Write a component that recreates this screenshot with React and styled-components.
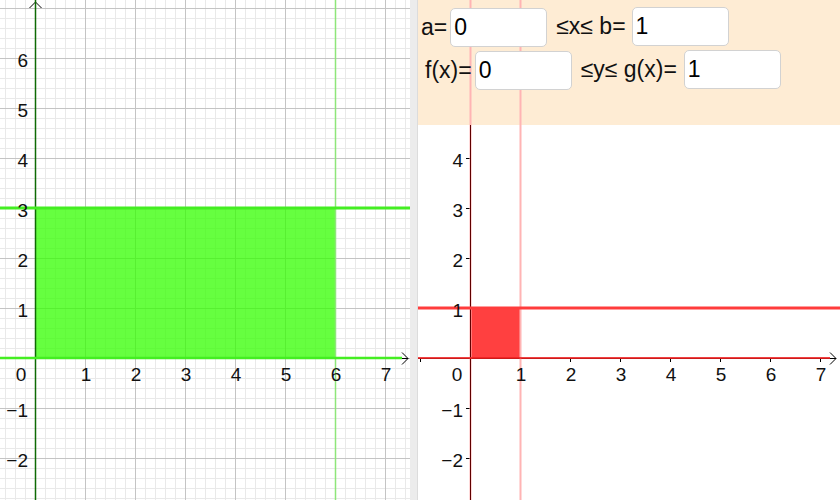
import styled, { createGlobalStyle } from 'styled-components';

const GlobalStyle = createGlobalStyle`
  html, body {
    margin: 0;
    padding: 0;
    background: #fff;
    overflow: hidden;
  }
  body {
    font-family: 'Liberation Sans', Arial, sans-serif;
  }
`;

const Page = styled.div`
  display: flex;
  width: 840px;
  height: 500px;
  overflow: hidden;
`;

const LeftView = styled.div`
  width: 410px;
  height: 500px;
  flex-shrink: 0;
  background: #fff;
`;

const Divider = styled.div`
  width: 7px;
  flex-shrink: 0;
  background: #ececec;
  border-right: 1px solid #dcdcdc;
`;

const RightView = styled.div`
  position: relative;
  flex: 1;
  height: 500px;
  background: #fff;
`;

const Canvas = styled.svg`
  position: absolute;
  inset: 0;
  pointer-events: none;
`;

const InputPanel = styled.div`
  height: 125px;
  box-sizing: border-box;
  padding: 6px 0 0 3px;
  background: #feecd4;
  display: flex;
  flex-direction: column;
  gap: 2px;
`;

const Row = styled.div`
  display: flex;
  align-items: center;
  gap: 9px;
  margin-left: ${(p) => p.$indent || 0}px;
`;

const Field = styled.label`
  display: flex;
  align-items: center;
  gap: ${(p) => p.$gap || 3}px;
  font-size: 23px;
  color: #111;
  white-space: pre;
  position: relative;
  z-index: 1;
  margin-top: ${(p) => p.$shift || 0}px;
`;

const Box = styled.input`
  width: 97px;
  height: 39px;
  box-sizing: border-box;
  border: 1px solid #d2d2d2;
  border-radius: 5px;
  background: #fff;
  padding: 0 3px;
  font-family: 'Liberation Sans', Arial, sans-serif;
  font-size: 23px;
  color: #000;
  outline: none;
`;

const U = 50;
const LABEL = { fontFamily: 'Liberation Sans, Arial, sans-serif', fontSize: 19, fill: '#111' };

function LeftGraph() {
  const ox = 35;
  const oy = 358;
  const minor = [];
  for (let x = ox - 30; x <= 410; x += 10) minor.push(x);
  const minorY = [];
  for (let y = oy - 360; y <= 500; y += 10) minorY.push(y);
  const xs = [1, 2, 3, 4, 5, 6, 7];
  const ys = [6, 5, 4, 3, 2, 1, -1, -2];
  return (
    <svg width="410" height="500" style={{ display: 'block' }}>
      {minor.map((x) => (
        <line key={'mx' + x} x1={x + 0.5} y1="0" x2={x + 0.5} y2="500" stroke="#e9e9e9" />
      ))}
      {minorY.map((y) => (
        <line key={'my' + y} x1="0" y1={y + 0.5} x2="410" y2={y + 0.5} stroke="#e9e9e9" />
      ))}
      {minor.filter((x) => (x - ox) % 50 === 0).map((x) => (
        <line key={'Mx' + x} x1={x + 0.5} y1="0" x2={x + 0.5} y2="500" stroke="#c4c4c4" />
      ))}
      {minorY.filter((y) => (oy - y) % 50 === 0).map((y) => (
        <line key={'My' + y} x1="0" y1={y + 0.5} x2="410" y2={y + 0.5} stroke="#c4c4c4" />
      ))}

      <rect x={ox} y={oy - 3 * U} width={6 * U} height={3 * U} fill="#33ff00" fillOpacity="0.75" />

      {/* axes */}
      <line x1="0" y1={oy + 0.5} x2="408" y2={oy + 0.5} stroke="#000" />
      <polyline points={`402,${oy - 5.5} 408,${oy + 0.5} 402,${oy + 6.5}`} fill="none" stroke="#000" />
      <line x1={ox + 0.5} y1="2" x2={ox + 0.5} y2="500" stroke="#000" />
      <polyline points={`${ox - 5.5},8 ${ox + 0.5},2 ${ox + 6.5},8`} fill="none" stroke="#000" />

      {/* boundary lines */}
      <line x1={ox + 6 * U + 0.5} y1="0" x2={ox + 6 * U + 0.5} y2="500" stroke="#8ee67a" strokeWidth="1.5" />
      <line x1={ox + 0.5} y1="0" x2={ox + 0.5} y2="500" stroke="#0e6a04" strokeWidth="1.5" />
      <line x1="0" y1={oy - 3 * U} x2="410" y2={oy - 3 * U} stroke="#44ee22" strokeWidth="3" />
      <line x1="0" y1={oy} x2="402" y2={oy} stroke="#44ee22" strokeWidth="2.5" />

      {xs.map((n) => (
        <text key={'xl' + n} x={ox + n * U + 1} y="381" textAnchor="middle" {...LABEL}>{n}</text>
      ))}
      <text x="21" y="381" textAnchor="middle" {...LABEL}>0</text>
      {ys.map((n) => (
        <text key={'yl' + n} x="28" y={oy - n * U + 9} textAnchor="end" {...LABEL}>
          {n < 0 ? '\u2212' + -n : n}
        </text>
      ))}
    </svg>
  );
}

function RightGraph() {
  const ox = 52;
  const oy = 358;
  const top = 125;
  const xs = [1, 2, 3, 4, 5, 6, 7];
  const ys = [4, 3, 2, 1, -1, -2];
  return (
    <Canvas width="422" height="500">
      <rect x={ox} y={oy - U} width={U} height={U} fill="#ff0000" fillOpacity="0.75" />

      {/* axes */}
      <line x1="0" y1={oy + 0.5} x2="418" y2={oy + 0.5} stroke="#000" />
      <polyline points={`412,${oy - 5.5} 418,${oy + 0.5} 412,${oy + 6.5}`} fill="none" stroke="#000" />
      <line x1={ox + 0.5} y1={top} x2={ox + 0.5} y2="500" stroke="#000" />
      {[-1, ...xs].map((n) => (
        <line key={'xt' + n} x1={ox + n * U + 0.5} y1={oy} x2={ox + n * U + 0.5} y2={oy + 4} stroke="#000" />
      ))}
      {ys.map((n) => (
        <line key={'yt' + n} x1={ox - 4} y1={oy - n * U + 0.5} x2={ox} y2={oy - n * U + 0.5} stroke="#000" />
      ))}

      {/* boundary lines */}
      <line x1={ox + U + 0.5} y1="0" x2={ox + U + 0.5} y2="500" stroke="#ffb4b4" strokeWidth="2" />
      <line x1={ox + 0.5} y1="0" x2={ox + 0.5} y2="500" stroke="#ffb4b4" strokeWidth="2" />
      <line x1={ox + 0.5} y1={top} x2={ox + 0.5} y2="500" stroke="#600000" strokeWidth="1" />
      <line x1="0" y1={oy - U} x2="422" y2={oy - U} stroke="#ff3c3c" strokeWidth="3" />
      <line x1="0" y1={oy} x2="412" y2={oy} stroke="#ee2020" strokeWidth="2" strokeOpacity="0.85" />

      {xs.map((n) => (
        <text key={'xl' + n} x={ox + n * U + 1} y="381" textAnchor="middle" {...LABEL}>{n}</text>
      ))}
      <text x="39" y="381" textAnchor="middle" {...LABEL}>0</text>
      {ys.map((n) => (
        <text key={'yl' + n} x="45" y={oy - n * U + 9} textAnchor="end" {...LABEL}>
          {n < 0 ? '\u2212' + -n : n}
        </text>
      ))}
    </Canvas>
  );
}

export default function App() {
  return (
    <Page>
      <GlobalStyle />
      <LeftView>
        <LeftGraph />
      </LeftView>
      <Divider />
      <RightView>
        <InputPanel>
          <Row>
            <Field $shift={2}>
              a=<Box defaultValue="0" />
            </Field>
            <Field $gap={6}>
              ≤x≤ b=<Box defaultValue="1" />
            </Field>
          </Row>
          <Row $indent={4}>
            <Field $shift={2}>
              f(x)=<Box defaultValue="0" />
            </Field>
            <Field $gap={7}>
              ≤y≤ g(x)=<Box defaultValue="1" />
            </Field>
          </Row>
        </InputPanel>
        <RightGraph />
      </RightView>
    </Page>
  );
}
